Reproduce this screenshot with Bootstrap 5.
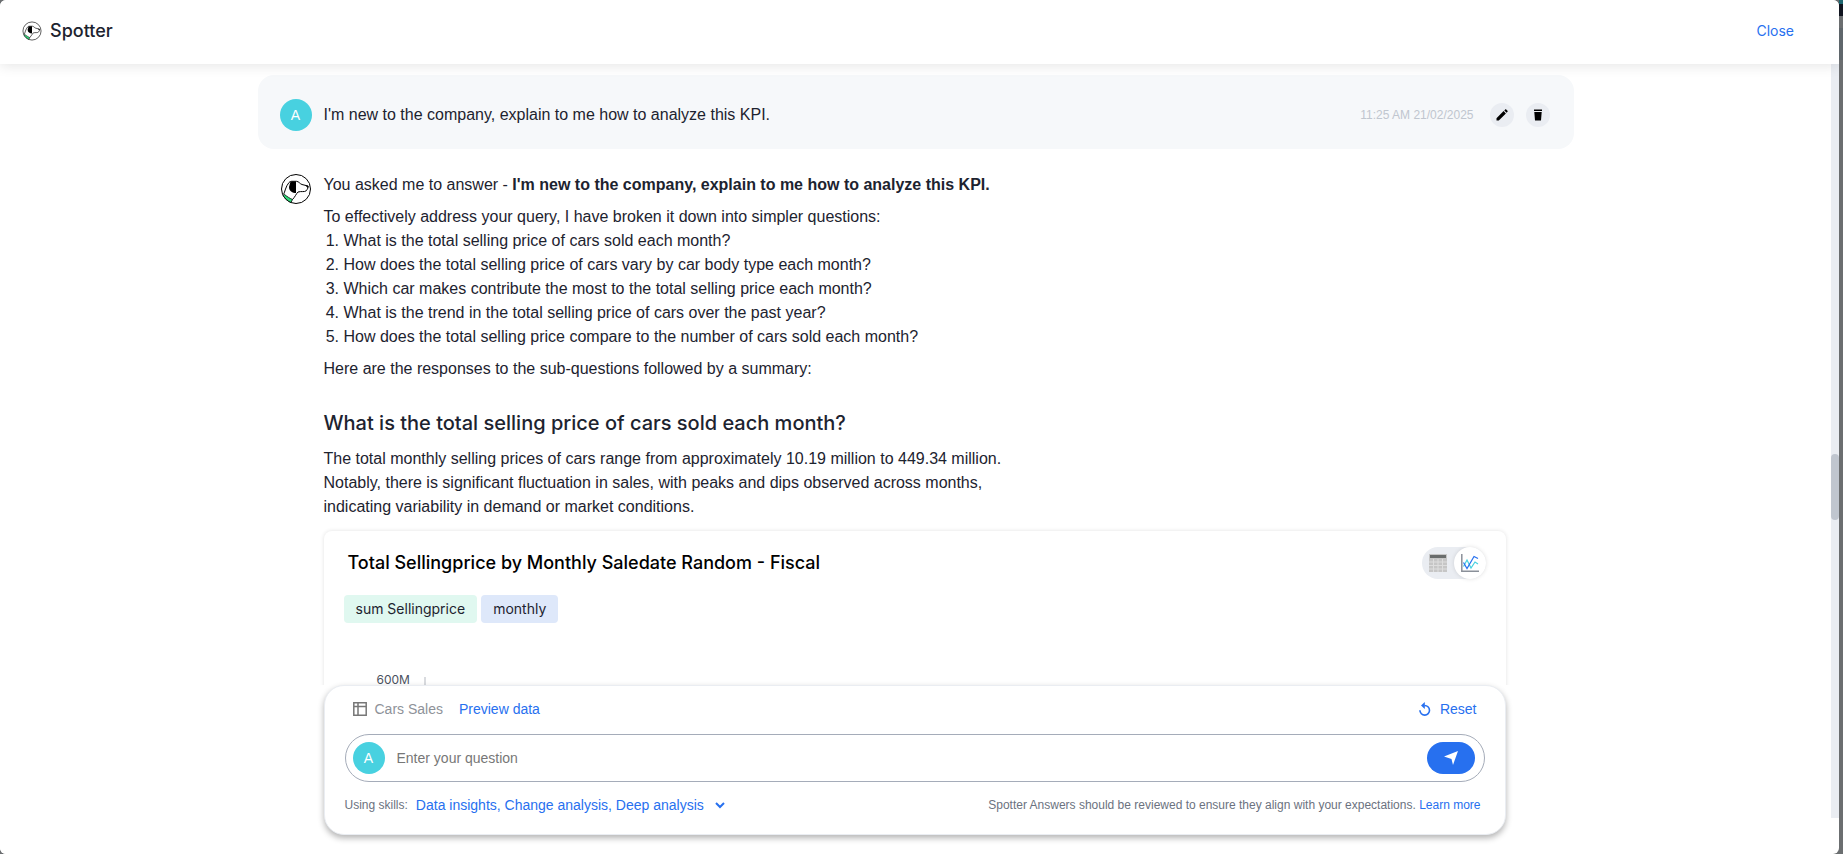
<!DOCTYPE html>
<html lang="en">
<head>
<meta charset="utf-8">
<meta name="viewport" content="width=device-width, initial-scale=1">
<title>Spotter</title>
<link href="https://cdn.jsdelivr.net/npm/bootstrap@5.3.0/dist/css/bootstrap.min.css" rel="stylesheet">
<style>
  :root { --ink: #1d232f; --link: #2770ef; --mist: #eaedf2; }
  body { font-family: "Liberation Sans", Arial, sans-serif; font-size: 16px; line-height: 24px; color: var(--ink); background: #6b6e70; }
  .brand-name, .top-bar .link-btn, .answer h3, .viz { font-family: Inter, "Liberation Sans", sans-serif; }
  a, .link-btn { color: var(--link); text-decoration: none; }
  .link-btn { background: none; border: 0; padding: 0; }
  .app-shell { height: 100vh; margin-right: 4px; background: #fff; border-radius: 6px; overflow: hidden; }
  .page-edge { top: 0; right: 0; width: 4px; height: 100%; background: linear-gradient(#1d6670 0 4px, #10141f 4px 16px, #6b6e70 16px 28px, #5f666b 28px 60px, #6b6e70 60px); }
  .top-bar { height: 64px; padding: 0 45px 2px 22px; box-shadow: 0 2px 12px rgba(0,0,0,.1); z-index: 2; }
  .top-bar .link-btn { font-size: 14px; }
  .brand-name { font-size: 18px; font-weight: 500; }
  .thread { max-width: 1316px; margin: 11px auto 0; }
  .scroll-track { width: 8px; margin-bottom: 36px; background: var(--mist); padding-top: 390px; }
  .scroll-thumb { height: 66px; border-radius: 4px; background: #c0c6cf; }
  .bubble { background: #f6f8fa; border-radius: 16px; padding: 24px 24px 18px 22px; }
  .avatar { width: 32px; height: 32px; border-radius: 50%; background: #48d1e0; color: #fff; font-size: 14px; }
  .avatar-gap { margin-right: 12px; }
  .stamp { font-size: 12px; color: #c0c6cf; }
  .round-btn { width: 24px; height: 24px; border: 0; border-radius: 50%; background: var(--mist); padding: 0; }
  .bubble-tools { gap: 12px; }
  .answer { padding: 24px 68px 0 22px; }
  .answer p { margin-bottom: 8px; }
  .answer ol { padding-left: 20px; margin-bottom: 8px; }
  .answer .lead-in { margin-bottom: 0; }
  .answer h3 { font-size: 20px; line-height: 28px; font-weight: 500; margin: 28px 0 10px; }
  .summary { max-width: 720px; }
  .viz { margin-top: 12px; height: 400px; border-radius: 8px; box-shadow: 0 0 4px rgba(0,0,0,.12); padding: 16px 20px 0; }
  .viz h4 { font-size: 18px; line-height: 32px; font-weight: 500; color: #000; margin: 0 0 0 4px; }
  .switcher { background: var(--mist); border-radius: 16px; }
  .switcher button { width: 32px; height: 32px; border: 0; padding: 0; background: none; border-radius: 50%; }
  .switcher .active { background: #fff; box-shadow: 0 0 4px rgba(0,0,0,.12); }
  .token { font-size: 14px; line-height: 28px; padding: 0 12px; border-radius: 4px; }
  .token-sum { background: #e0f8f0; } .token-month { background: #dee8fa; }
  .axis { font-size: 12px; line-height: 16px; color: #4a515e; margin: 49px 0 0 33px; }
  .axis-line { width: 2px; height: 100px; margin: 5px 0 0 14px; background: #d9dbdf; }
  .dock { left: 0; right: 8px; bottom: 0; padding-bottom: 19px; background: #fff; z-index: 1; }
  .dock-column { max-width: 1316px; margin: 0 auto; padding: 0 68px 0 66px; }
  .composer { background: #fff; border: 1px solid var(--mist); border-radius: 20px; box-shadow: 0 3px 6px rgba(0,0,0,.3); padding: 12px 20px 18px; }
  .composer-row { font-size: 14px; line-height: 22px; }
  .source-name { color: #8e9299; }
  .ask { height: 48px; border: 1px solid #a5acb9; border-radius: 24px; padding: 0 9px 0 7px; margin: 14px 0 12px; }
  .ask input { border: 0; outline: 0; font-size: 14px; color: var(--ink); }
  .ask input::placeholder { color: #777; }
  .send-btn { width: 48px; height: 32px; border: 0; border-radius: 16px; background: var(--link); padding: 0; }
  .fine { font-size: 12px; color: #6b7280; }
</style>
</head>
<body>
<svg class="d-none" aria-hidden="true">
  <symbol id="spotter" viewBox="-1 -1 32 32">
    <circle cx="15" cy="15" r="14.5" fill="#fff" stroke="#000"/>
    <path d="M2.200 21.500 3.500 20.500C6 22.500 9 24.500 11.500 25.500L10 28.500C6.500 27 4 24.500 2.200 21.500z" fill="#2fdc7a" stroke="#000" stroke-width=".8"/>
    <path d="M2.500 20.500C4 18 4.500 12.500 8 8.500 9 7.500 10 7.300 11 7.300h4.500C18 7.500 19 10 21 10.500L27 12c.5 1-.3 3-1.800 4.800-2 1.500-4.700.2-8.200 1.200-2 2-3 5-5.500 7.500" fill="none" stroke="#000"/>
    <path d="M9.500 7.500h5.500V19C11.500 19 8 17 8 13z" fill="#000"/>
    <path d="M24 11l3.500 1-.8 2z" fill="#000"/>
  </symbol>
</svg>
<div class="app-shell d-flex flex-column position-relative">
  <header class="top-bar d-flex align-items-center justify-content-between flex-shrink-0 position-relative bg-white">
    <div class="d-flex align-items-center gap-2">
      <svg width="20" height="20" aria-hidden="true"><use href="#spotter"/></svg>
      <span class="brand-name">Spotter</span>
    </div>
    <button class="link-btn" type="button">Close</button>
  </header>
  <main class="d-flex flex-fill overflow-hidden">
    <div class="flex-fill overflow-hidden">
      <div class="thread">
        <div class="bubble d-flex align-items-center">
          <span class="avatar avatar-gap d-flex align-items-center justify-content-center">A</span>
          <span class="flex-fill">I'm new to the company, explain to me how to analyze this KPI.</span>
          <span class="stamp me-3">11:25 AM 21/02/2025</span>
          <div class="bubble-tools d-flex">
            <button class="round-btn d-flex align-items-center justify-content-center" type="button" aria-label="Edit"><svg width="12" height="12" viewBox="0 0 12 12"><path d="M.5 11.500v-2.300L7.600 2.100l2.300 2.300-7.100 7.100zM8.300 1.400l.9-.9c.3-.3.7-.3 1 0l1.300 1.300c.3.300.3.700 0 1l-.9.9z"/></svg></button>
            <button class="round-btn d-flex align-items-center justify-content-center" type="button" aria-label="Delete"><svg width="12" height="12" viewBox="0 0 12 12"><path d="M2 .5h8v1.500H2zM2.300 3h7.400L9 11.500H3z"/></svg></button>
          </div>
        </div>
        <article class="answer d-flex align-items-start">
          <svg class="avatar-gap flex-shrink-0" width="32" height="32" aria-hidden="true"><use href="#spotter"/></svg>
          <div class="flex-fill">
            <p>You asked me to answer - <strong>I'm new to the company, explain to me how to analyze this KPI.</strong></p>
            <p class="lead-in">To effectively address your query, I have broken it down into simpler questions:</p>
            <ol>
              <li>What is the total selling price of cars sold each month?</li>
              <li>How does the total selling price of cars vary by car body type each month?</li>
              <li>Which car makes contribute the most to the total selling price each month?</li>
              <li>What is the trend in the total selling price of cars over the past year?</li>
              <li>How does the total selling price compare to the number of cars sold each month?</li>
            </ol>
            <p>Here are the responses to the sub-questions followed by a summary:</p>
            <h3>What is the total selling price of cars sold each month?</h3>
            <p class="summary">The total monthly selling prices of cars range from approximately 10.19 million to 449.34 million. Notably, there is significant fluctuation in sales, with peaks and dips observed across months, indicating variability in demand or market conditions.</p>
            <section class="viz">
              <div class="d-flex justify-content-between">
                <h4>Total Sellingprice by Monthly Saledate Random - Fiscal</h4>
                <div class="switcher d-flex">
                  <button type="button" class="d-flex align-items-center justify-content-center" aria-label="Table"><svg width="18" height="18" viewBox="0 0 18 18"><path fill="#c6c6c6" d="M0 0h18v18H0z"/><path fill="#6a6d6d" d="M1 1h16v3H1z"/><path d="M0 8h18M0 11.500h18M0 15h18M4.500 5v13M9 5v13M13.500 5v13" stroke="#dedede"/></svg></button>
                  <button type="button" class="active d-flex align-items-center justify-content-center" aria-label="Chart"><svg width="18" height="18" viewBox="0 0 18 18" fill="none"><path d="M.8 0v17.200H18" stroke="#8a9099" stroke-width="1.500"/><path d="M2.500 12.500 6 6l4 8 4-6 3 2" stroke="#48d1e0" stroke-width="1.200"/><path d="M2.500 8.500l3.500 6L13 2.500l4 2" stroke="#2770ef" stroke-width="1.200"/></svg></button>
                </div>
              </div>
              <div class="d-flex gap-1 mt-3"><span class="token token-sum">sum Sellingprice</span><span class="token token-month">monthly</span></div>
              <div class="axis d-flex"><span>600M</span><span class="axis-line"></span></div>
            </section>
          </div>
        </article>
      </div>
    </div>
    <div class="scroll-track" aria-hidden="true"><div class="scroll-thumb"></div></div>
  </main>
  <div class="dock position-absolute">
    <div class="dock-column">
      <form class="composer">
        <div class="composer-row d-flex align-items-center px-2">
          <svg class="me-2" width="14" height="14" viewBox="0 0 14 14" fill="none" stroke="#777" stroke-width="1.500"><path d="M.8.8h12.400v12.400H.8zM.8 4.500h12.400M5 .8v12.400"/></svg>
          <span class="source-name">Cars Sales</span>
          <a class="ms-3" href="#">Preview data</a>
          <button class="link-btn ms-auto d-flex align-items-center gap-2" type="reset"><svg width="14" height="14" viewBox="0 0 14 14" fill="none"><path d="M6.500 3.500A4.800 4.800 0 1 1 1.900 8.300" stroke="#2770ef" stroke-width="1.600"/><path d="M6.800 0v7L3 3.500z" fill="#2770ef"/></svg>Reset</button>
        </div>
        <div class="ask d-flex align-items-center">
          <span class="avatar d-flex align-items-center justify-content-center flex-shrink-0">A</span>
          <input class="flex-fill ms-2 px-1" type="text" placeholder="Enter your question" aria-label="Question">
          <button class="send-btn d-flex align-items-center justify-content-center" type="submit" aria-label="Send"><svg width="14" height="14" viewBox="0 0 14 14"><path d="M14 0 9 14 7.500 8 0 5.500z" fill="#fff"/></svg></button>
        </div>
        <div class="composer-row d-flex align-items-center">
          <span class="fine me-2">Using skills:</span>
          <button class="link-btn d-flex align-items-center gap-2" type="button">Data insights, Change analysis, Deep analysis <svg width="16" height="16" viewBox="0 0 16 16" fill="none"><path d="M4 6l4 4 4-4" stroke="#2770ef" stroke-width="2"/></svg></button>
          <span class="fine ms-auto me-1">Spotter Answers should be reviewed to ensure they align with your expectations. <a href="#">Learn more</a></span>
        </div>
      </form>
    </div>
  </div>
</div>
<div class="page-edge position-fixed" aria-hidden="true"></div>
<script src="https://cdn.jsdelivr.net/npm/bootstrap@5.3.0/dist/js/bootstrap.bundle.min.js"></script>
</body>
</html>
